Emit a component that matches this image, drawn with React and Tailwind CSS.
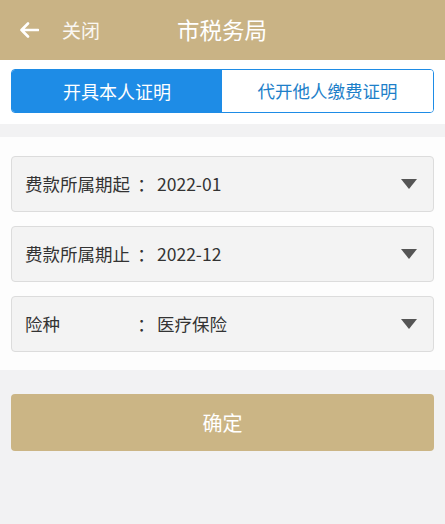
import React from "react";

function Caret() {
  return (
    <svg width="16" height="10" viewBox="0 0 16 10" className="shrink-0">
      <polygon points="0,0 16,0 8,10" fill="#555555" />
    </svg>
  );
}

function SelectRow({ label, value }) {
  return (
    <div className="h-[56px] rounded-[4px] border border-[#dcdcdc] bg-[#f3f3f3] flex items-center pl-[13px] pr-[16px] text-[17.5px] text-[#333333]">
      <span className="w-[112px] whitespace-nowrap">{label}</span>
      <span className="w-[18px] text-center">：</span>
      <span className="ml-[2px] flex-1">{value}</span>
      <Caret />
    </div>
  );
}

export default function App() {
  return (
    <div
      className="w-[445px] h-[524px] bg-[#f2f2f3] flex flex-col overflow-hidden"
      style={{ fontFamily: '"Noto Sans CJK SC", "Noto Sans", sans-serif' }}
    >
      <div className="h-[60px] bg-[#c9b385] flex items-center shrink-0">
        <svg width="20" height="16" viewBox="0 0 20 16" className="ml-[19px]">
          <path d="M19 8H2.5M9 1.5L2.5 8L9 14.5" stroke="#ffffff" strokeWidth="2.6" fill="none" strokeLinecap="round" strokeLinejoin="round" />
        </svg>
        <span className="ml-[23px] text-[19px] text-white/90">关闭</span>
        <span className="ml-[77px] text-[22.5px] text-white">市税务局</span>
      </div>
      <div className="bg-white pt-[9px] pb-[11px] px-[11px] shrink-0">
        <div className="h-[44px] flex rounded-[4px] border border-[#1e8ce6] overflow-hidden">
          <div className="w-[210px] bg-[#1e8ce6] text-white text-[18px] flex items-center justify-center">
            开具本人证明
          </div>
          <div className="flex-1 bg-white text-[#1e7fc9] text-[17.5px] flex items-center justify-center">
            代开他人缴费证明
          </div>
        </div>
      </div>
      <div className="h-[13px] shrink-0" />
      <div className="bg-[#fdfdfd] pt-[19px] pb-[18px] px-[11px] flex flex-col gap-[14px] shrink-0">
        <SelectRow label="费款所属期起" value="2022-01" />
        <SelectRow label="费款所属期止" value="2022-12" />
        <SelectRow label="险种" value="医疗保险" />
      </div>
      <div className="px-[11px] pt-[24px]">
        <button className="w-full h-[57px] rounded-[4px] bg-[#cbb585] text-white text-[20px] flex items-center justify-center">
          确定
        </button>
      </div>
    </div>
  );
}
